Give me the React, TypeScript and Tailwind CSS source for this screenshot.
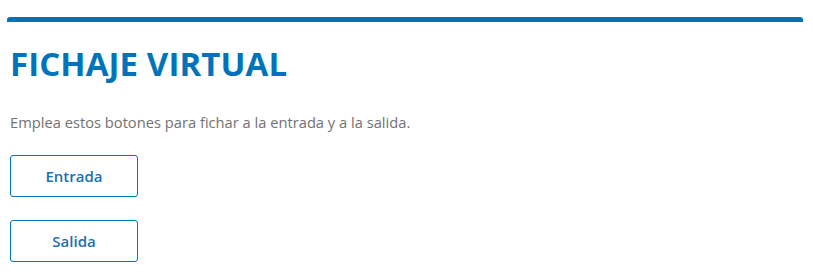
export default function App() {
  return (
    <div className="w-full bg-white pl-[7px] pr-[10px] pt-[17px]" style={{ fontFamily: '"Open Sans", sans-serif' }}>
      {/* top accent */}
      <div className="h-[5px] bg-[#0073bb] rounded-t-[3px]" />

      <div className="px-[3px]">
        <h1 className="mt-[22px] text-[33px] leading-[40px] font-bold tracking-[0.1px] text-[#0073bb]">
          FICHAJE VIRTUAL
        </h1>
        <p className="mt-[28px] text-[14.7px] leading-[20px] text-[#727272]">
          Emplea estos botones para fichar a la entrada y a la salida.
        </p>

        <div className="mt-[23px] flex flex-col gap-[23px]">
          <button className="w-[128px] h-[42px] border border-[#0073bb] rounded-[3px] bg-white text-[15px] font-semibold text-[#1a6fb5]">
            Entrada
          </button>
          <button className="w-[128px] h-[42px] border border-[#0073bb] rounded-[3px] bg-white text-[15px] font-semibold text-[#1a6fb5]">
            Salida
          </button>
        </div>
      </div>
    </div>
  )
}
